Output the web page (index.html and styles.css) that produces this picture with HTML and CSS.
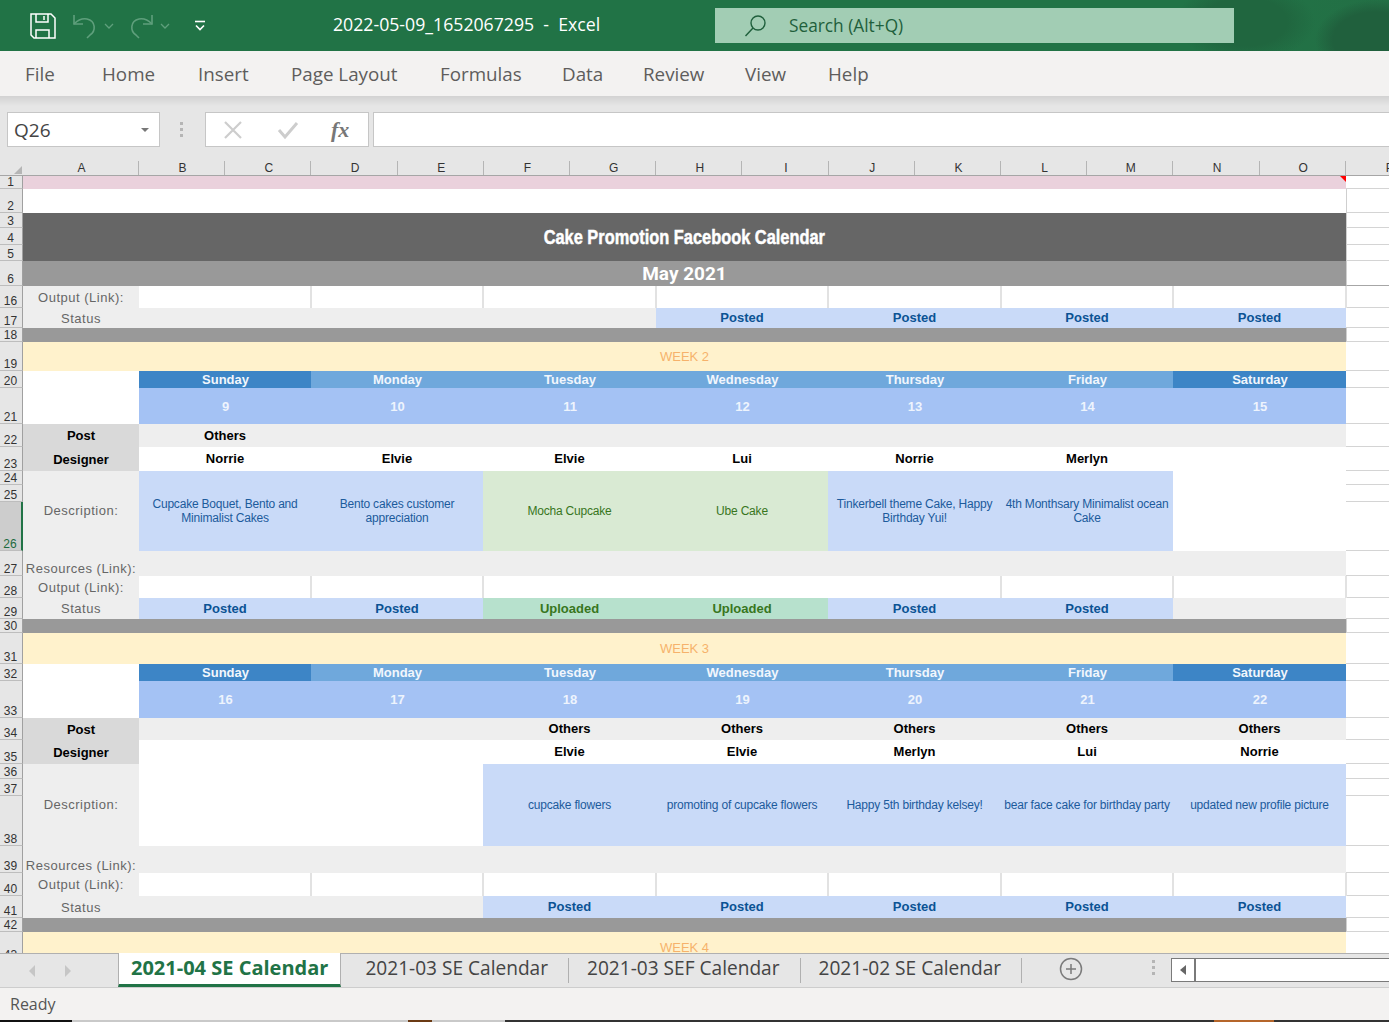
FILE: index.html
```html
<!DOCTYPE html>
<html lang="en">
<head>
<meta charset="utf-8">
<title>2022-05-09_1652067295 - Excel</title>
<link rel="stylesheet" href="styles.css">
</head>
<body>
<div class="app">
  <header class="titlebar">
    <div class="qat">
      <svg class="i-save" width="26" height="26" viewBox="0 0 26 26" fill="none" stroke="#fff" stroke-width="1.5"><path d="M1 1h20l4 4v20H4l-3-3z"/><path d="M6 1v8h12V1"/><path d="M14 3v4" /><path d="M6 25v-8h13v8"/></svg>
      <svg class="i-undo" width="24" height="26" viewBox="0 0 24 26" fill="none" stroke="#5f9f7c" stroke-width="1.6"><path d="M1 2v9h9"/><path d="M1 11c4-4 8-6 13-5 9 2 9 12 3 16l-3 3"/></svg>
      <svg class="i-chev" width="10" height="6" viewBox="0 0 10 6" fill="none" stroke="#5f9f7c" stroke-width="1.3"><path d="M1 1l4 4 4-4"/></svg>
      <svg class="i-redo" width="24" height="26" viewBox="0 0 24 26" fill="none" stroke="#5f9f7c" stroke-width="1.6"><path d="M23 2v9h-9"/><path d="M23 11c-4-4-8-6-13-5C1 8 1 18 7 22l3 3"/></svg>
      <svg class="i-chev" width="10" height="6" viewBox="0 0 10 6" fill="none" stroke="#5f9f7c" stroke-width="1.3"><path d="M1 1l4 4 4-4"/></svg>
      <svg class="i-more" width="12" height="12" viewBox="0 0 12 12" fill="none" stroke="#fff" stroke-width="1.6"><path d="M1 1.5h10"/><path d="M2 5.5l4 4 4-4"/></svg>
    </div>
    <div class="doc-title">2022-05-09_1652067295&nbsp; -&nbsp; Excel</div>
    <div class="search">
      <svg width="24" height="24" viewBox="0 0 24 24" fill="none" stroke="#1f5f3c" stroke-width="1.4"><circle cx="14" cy="9" r="7"/><path d="M9 14l-7.500 8"/></svg>
      <span>Search (Alt+Q)</span>
    </div>
  </header>

  <nav class="ribbon">
    <span>File</span><span>Home</span><span>Insert</span><span>Page Layout</span><span>Formulas</span><span>Data</span><span>Review</span><span>View</span><span>Help</span>
  </nav>

  <section class="formula">
    <div class="namebox"><span>Q26</span><i class="down"></i></div>
    <div class="grip"><i></i><i></i><i></i></div>
    <div class="fxbox">
      <svg width="20" height="20" viewBox="0 0 20 20" fill="none" stroke="#cdcdcd" stroke-width="2.200"><path d="M2 2l16 16M18 2L2 18"/></svg>
      <svg width="22" height="20" viewBox="0 0 22 20" fill="none" stroke="#cdcdcd" stroke-width="3"><path d="M2 10l6 7L20 3"/></svg>
      <span class="fx">fx</span>
    </div>
    <div class="input"></div>
  </section>

  <div class="colheads">
    <div class="corner"><i></i></div>
    <div class="ch">A</div><div class="ch">B</div><div class="ch">C</div><div class="ch">D</div><div class="ch">E</div><div class="ch">F</div><div class="ch">G</div><div class="ch">H</div><div class="ch">I</div><div class="ch">J</div><div class="ch">K</div><div class="ch">L</div><div class="ch">M</div><div class="ch">N</div><div class="ch">O</div><div class="ch last">P</div>
  </div>

  <main class="sheet">
    <div class="grid">
      <div class="rh">1</div><div class="c pink full"><i class="comment"></i></div><div class="p"></div>
      <div class="rh">2</div><div class="c full"></div><div class="p v"></div>
      <div class="rh">3</div><div class="c title full r3"><span class="title-text">Cake Promotion Facebook Calendar</span></div><div class="p v"></div>
      <div class="rh">4</div><div class="p v"></div>
      <div class="rh">5</div><div class="p v"></div>
      <div class="rh">6</div><div class="c month full">May 2021</div><div class="p v strong"></div>

      <div class="rh">16</div><div class="c lab">Output (Link):</div><div class="c out"></div><div class="c out"></div><div class="c out"></div><div class="c out"></div><div class="c out"></div><div class="c out"></div><div class="c out"></div><div class="p"></div>
      <div class="rh">17</div><div class="c lab">Status</div><div class="c gray"></div><div class="c gray"></div><div class="c gray"></div><div class="c st">Posted</div><div class="c st">Posted</div><div class="c st">Posted</div><div class="c st">Posted</div><div class="p"></div>
      <div class="rh">18</div><div class="c band full"></div><div class="p v"></div>

      <div class="rh">19</div><div class="c week full">WEEK 2</div><div class="p"></div>
      <div class="rh">20</div><div class="c r2"></div><div class="c dw dk">Sunday</div><div class="c dw">Monday</div><div class="c dw">Tuesday</div><div class="c dw">Wednesday</div><div class="c dw">Thursday</div><div class="c dw">Friday</div><div class="c dw dk">Saturday</div><div class="p"></div>
      <div class="rh">21</div><div class="c dn">9</div><div class="c dn">10</div><div class="c dn">11</div><div class="c dn">12</div><div class="c dn">13</div><div class="c dn">14</div><div class="c dn">15</div><div class="p"></div>
      <div class="rh">22</div><div class="c hd">Post</div><div class="c po">Others</div><div class="c po"></div><div class="c po"></div><div class="c po"></div><div class="c po"></div><div class="c po"></div><div class="c po"></div><div class="p"></div>
      <div class="rh">23</div><div class="c hd">Designer</div><div class="c de">Norrie</div><div class="c de">Elvie</div><div class="c de">Elvie</div><div class="c de">Lui</div><div class="c de">Norrie</div><div class="c de">Merlyn</div><div class="c de"></div><div class="p"></div>
      <div class="rh">24</div><div class="c lab r3">Description:</div><div class="c ds r3">Cupcake Boquet, Bento and<br>Minimalist Cakes</div><div class="c ds r3">Bento cakes customer<br>appreciation</div><div class="c ds gr r3">Mocha Cupcake</div><div class="c ds gr r3">Ube Cake</div><div class="c ds r3">Tinkerbell theme Cake, Happy<br>Birthday Yui!</div><div class="c ds r3">4th Monthsary Minimalist ocean<br>Cake</div><div class="c r3"></div><div class="p"></div>
      <div class="rh">25</div><div class="p"></div>
      <div class="rh sel">26</div><div class="p"></div>
      <div class="rh">27</div><div class="c lab btm">Resources (Link):</div><div class="c gray w7"></div><div class="p"></div>
      <div class="rh">28</div><div class="c lab">Output (Link):</div><div class="c out"></div><div class="c out"></div><div class="c out nb"></div><div class="c out nb"></div><div class="c out"></div><div class="c out"></div><div class="c out"></div><div class="p"></div>
      <div class="rh">29</div><div class="c lab">Status</div><div class="c st low">Posted</div><div class="c st low">Posted</div><div class="c st up low">Uploaded</div><div class="c st up low">Uploaded</div><div class="c st low">Posted</div><div class="c st low">Posted</div><div class="c gray"></div><div class="p"></div>
      <div class="rh">30</div><div class="c band full"></div><div class="p v"></div>

      <div class="rh">31</div><div class="c week full">WEEK 3</div><div class="p"></div>
      <div class="rh">32</div><div class="c r2"></div><div class="c dw dk">Sunday</div><div class="c dw">Monday</div><div class="c dw">Tuesday</div><div class="c dw">Wednesday</div><div class="c dw">Thursday</div><div class="c dw">Friday</div><div class="c dw dk">Saturday</div><div class="p"></div>
      <div class="rh">33</div><div class="c dn">16</div><div class="c dn">17</div><div class="c dn">18</div><div class="c dn">19</div><div class="c dn">20</div><div class="c dn">21</div><div class="c dn">22</div><div class="p"></div>
      <div class="rh">34</div><div class="c hd">Post</div><div class="c po"></div><div class="c po"></div><div class="c po">Others</div><div class="c po">Others</div><div class="c po">Others</div><div class="c po">Others</div><div class="c po">Others</div><div class="p"></div>
      <div class="rh">35</div><div class="c hd">Designer</div><div class="c de"></div><div class="c de"></div><div class="c de">Elvie</div><div class="c de">Elvie</div><div class="c de">Merlyn</div><div class="c de">Lui</div><div class="c de">Norrie</div><div class="p"></div>
      <div class="rh">36</div><div class="c lab r3">Description:</div><div class="c r3"></div><div class="c r3"></div><div class="c ds r3">cupcake flowers</div><div class="c ds r3">promoting of cupcake flowers</div><div class="c ds r3">Happy 5th birthday kelsey!</div><div class="c ds r3">bear face cake for birthday party</div><div class="c ds r3">updated new profile picture</div><div class="p"></div>
      <div class="rh">37</div><div class="p"></div>
      <div class="rh">38</div><div class="p"></div>
      <div class="rh">39</div><div class="c lab btm">Resources (Link):</div><div class="c gray w7"></div><div class="p"></div>
      <div class="rh">40</div><div class="c lab">Output (Link):</div><div class="c out"></div><div class="c out"></div><div class="c out"></div><div class="c out"></div><div class="c out"></div><div class="c out"></div><div class="c out"></div><div class="p"></div>
      <div class="rh">41</div><div class="c lab">Status</div><div class="c gray"></div><div class="c gray"></div><div class="c st">Posted</div><div class="c st">Posted</div><div class="c st">Posted</div><div class="c st">Posted</div><div class="c st">Posted</div><div class="p"></div>
      <div class="rh">42</div><div class="c band full"></div><div class="p v"></div>

      <div class="rh">43</div><div class="c week full">WEEK 4</div><div class="p"></div>
    </div>
  </main>

  <div class="tabs">
    <div class="tabnav"><i class="tl"></i><i class="tr"></i></div>
    <div class="tab active">2021-04 SE Calendar</div>
    <div class="tab">2021-03 SE Calendar</div>
    <div class="tab">2021-03 SEF Calendar</div>
    <div class="tab">2021-02 SE Calendar</div>
    <svg class="add" width="24" height="24" viewBox="0 0 24 24" fill="none" stroke="#7b7b7b" stroke-width="1.500"><circle cx="12" cy="12" r="10.500"/><path d="M12 7v10M7 12h10"/></svg>
    <div class="grip tabgrip"><i></i><i></i><i></i></div>
    <div class="hscroll"><div class="hbtn"><i></i></div></div>
  </div>

  <footer class="status">Ready</footer>
  <div class="taskbar"></div>
</div>
</body>
</html>
```
FILE: styles.css
```css
* { box-sizing: border-box; }
html, body { margin: 0; padding: 0; background: #f3f2f1; }
.app {
  width: 1389px; height: 1022px; overflow: hidden;
  display: flex; flex-direction: column;
  font-family: "Open Sans", "Noto Sans", sans-serif;
}

/* title bar */
.titlebar {
  height: 51px; flex: none; display: flex; align-items: center; color: #fff;
  background:
    radial-gradient(ellipse 70px 40px at 1245px 22px, #20663f 60%, transparent 100%),
    radial-gradient(ellipse 60px 40px at 1375px 40px, #20603d 70%, transparent 100%),
    linear-gradient(90deg, #217346 88%, #236f45 100%);
}
.qat { width: 333px; flex: none; display: flex; align-items: center; padding-left: 30px; }
.i-save { margin-right: 17px; }
.i-undo { margin-right: 7px; }
.i-chev { margin-right: 15px; }
.i-redo { margin-right: 7px; }
.i-more { margin-left: 9px; }
.doc-title { width: 382px; flex: none; font-size: 17.7px; margin-top: -3px; }
.search {
  width: 519px; height: 35px; flex: none;
  background: #a2cdb4; color: #1f5f3c; font-size: 17.3px;
  display: flex; align-items: center; padding-left: 29px; gap: 21px;
}

/* ribbon */
.ribbon {
  height: 45px; flex: none; background: #f3f2f1; color: #5e5d5c;
  font-size: 18.8px; padding-left: 25px;
  display: grid; align-items: center;
  grid-template-columns: 77px 96px 93px 149px 122px 81px 102px 83px 1fr;
}

/* formula bar */
.formula {
  height: 51px; flex: none; display: flex; align-items: flex-start; padding: 16px 0 0 7px;
  background: linear-gradient(#d2d2d2 0, #e6e6e6 10px);
}
.namebox {
  width: 153px; height: 35px; background: #fff; border: 1px solid #c6c6c6;
  display: flex; align-items: center; justify-content: space-between;
  padding: 0 10px 0 6px; font-size: 19px; color: #444;
}
.down { width: 0; height: 0; border: 4px solid transparent; border-top: 4px solid #777; border-bottom: 0; }
.grip { display: flex; flex-direction: column; gap: 3px; width: 45px; align-items: center; padding: 10px 2px 0 0; flex: none; }
.grip i { width: 3px; height: 3px; background: #b5b5b5; display: block; }
.fxbox {
  width: 164px; height: 35px; background: #fff; border: 1px solid #c6c6c6;
  display: flex; align-items: center; padding-left: 17px; gap: 34px; flex: none;
}
.fx { font-family: "Liberation Serif", serif; font-style: italic; font-weight: 700; font-size: 22px; color: #777; margin-left: -2px; }
.input { flex: 1; height: 35px; margin-left: 4px; background: #fff; border: 1px solid #c6c6c6; border-right: 0; }

/* column heads */
.colheads {
  height: 29px; flex: none; background: #e6e6e6;
  display: grid; grid-template-columns: 23px 116px repeat(14, 86.2143px) 86px;
  align-items: end; border-bottom: 1px solid #a6a6a6;
  font-family: "Liberation Sans", sans-serif; font-size: 12px; color: #333;
  width: 1389px; overflow: hidden;
}
.corner { height: 14px; position: relative; }
.corner i { display: block; position: absolute; right: 1px; bottom: 1px; width: 0; height: 0; border-left: 8px solid transparent; border-bottom: 8px solid #b5b5b5; }
.ch { height: 14px; line-height: 14px; text-align: center; border-right: 1px solid #b5b5b5; padding-left: 2px; }
.ch.last { border-right: 0; }

/* sheet */
.sheet { height: 777px; flex: none; overflow: hidden; background: #fff; position: relative; }
.grid {
  display: grid;
  grid-template-columns: 23px 116px 172px 172px 173px 172px 173px 172px 173px 43px;
  grid-template-rows:
    13px 24px 15px 17px 16px 25px 22px 20px 14px 29px 17px 36px 23px 24px 14px 17px 49px
    25px 22px 21px 14px 31px 17px 37px 22px 24px 15px 17px 50px 27px 23px 22px 14px 30px;
  font-family: "Liberation Sans", sans-serif; font-size: 13px;
}
.rh {
  grid-column: 1; background: #e6e6e6; color: #333; font-size: 12px;
  border-right: 1px solid #a0a0a0; border-bottom: 1px solid #bdbdbd;
  display: flex; align-items: flex-end; justify-content: center; padding-right: 1px; line-height: 11px;
}
.rh.sel { background: #cdcdcd; color: #1d6b40; border-right: 2px solid #217346; }
.c { display: flex; align-items: center; justify-content: center; text-align: center; min-width: 0; position: relative; }
.full { grid-column: 2 / span 8; }
.r2 { grid-row: span 2; }
.r3 { grid-row: span 3; }
.w7 { grid-column: span 7; }
.p { grid-column: 10; background: #fff; border-bottom: 1px solid #d4d4d4; }
.p.v { border-left: 1px solid #cfcfcf; }
.p.strong { border-bottom-color: #a6a6a6; }
.pink { background: #ead1dc; }
.comment { position: absolute; right: 0; top: 0; width: 0; height: 0; border-left: 6px solid transparent; border-top: 6px solid #f00; }
.title { background: #666; color: #fff; font-weight: 700; font-size: 21px; }
.title-text { display: inline-block; white-space: nowrap; transform: scaleX(.78); -webkit-text-stroke: .5px #fff; }
.month { background: #999; color: #fff; font-family: Roboto, sans-serif; font-weight: 700; font-size: 19px; }
.lab { background: #eee; color: #666; letter-spacing: .5px; white-space: nowrap; }
.lab.r3 { padding-bottom: 2px; }
.btm { align-items: flex-end; }
.gray { background: #eee; }
.out { background: #fff; }
.out::after { content: ""; position: absolute; top: 0; bottom: 0; right: -1px; width: 2px; background: #e2e2e2; z-index: 1; }
.out.nb::after { content: none; }
.st { background: #c9daf8; color: #0b5394; font-weight: 700; padding-bottom: 2px; }
.st.low { padding-bottom: 0; }
.st.up { background: #b7e1cd; color: #38761d; }
.band { background: #999; }
.week { background: #fff2cc; color: #f6b26b; font-size: 13px; }
.dw { background: #6fa8dc; color: #f1f6fc; font-weight: 700; padding-left: 1px; }
.dw.dk { background: #3d85c6; }
.dn { background: #a4c2f4; color: #eef4fd; font-weight: 700; padding-left: 1px; }
.hd { background: #d9d9d9; color: #000; font-weight: 700; }
.po { background: #eee; color: #000; font-weight: 700; padding-bottom: 1px; }
.de { background: #fff; color: #000; font-weight: 700; padding-bottom: 2px; }
.ds { background: #c9daf8; color: #1c5b9c; font-size: 12px; letter-spacing: -.2px; line-height: 14px; white-space: nowrap; }
.ds.gr { background: #d9ead3; color: #38761d; }

/* tabs */
.tabs {
  height: 35px; flex: none; background: #e6e6e6;
  border-top: 1px solid #b0b0b0; border-bottom: 1px solid #cdcdcd;
  display: flex; align-items: stretch; font-size: 19.1px; color: #444;
}
.tabnav { width: 118px; flex: none; display: flex; align-items: center; gap: 30px; padding-left: 29px; }
.tl, .tr { width: 0; height: 0; border: 6px solid transparent; display: block; }
.tl { border-right: 6px solid #c6c6c6; border-left: 0; }
.tr { border-left: 6px solid #c6c6c6; border-right: 0; }
.tab { display: flex; align-items: center; padding: 0 21px 6px 18px; position: relative; white-space: nowrap; }
.tab:not(.active)::after { content: ""; position: absolute; right: 0; top: 4px; bottom: 4px; width: 1px; background: #b0b0b0; }
.tab.active {
  background: #fff; color: #217346; font-weight: 700; font-size: 20px; padding: 0 12px 2px;
  border-left: 1px solid #b0b0b0; border-right: 1px solid #b0b0b0;
  border-bottom: 3px solid #217346; margin-top: -1px; margin-right: 6px;
}
.add { align-self: center; margin-left: 37px; margin-top: -3px; flex: none; }
.tabgrip { width: 10px; margin-left: 65px; padding: 6px 0 0; }
.hscroll { margin-left: 13px; flex: 1; margin-top: 4px; margin-bottom: 5px; background: #fff; border: 1px solid #7a7a7a; border-right: 0; }
.hbtn { width: 24px; height: 100%; border-right: 2px solid #7a7a7a; display: flex; align-items: center; justify-content: center; }
.hbtn i { display: block; width: 0; height: 0; border: 5px solid transparent; border-right: 6px solid #666; border-left: 0; }

/* status */
.status { height: 32px; flex: none; background: #f3f2f1; color: #555; font-size: 16px; padding-left: 10px; line-height: 33px; }
.taskbar {
  height: 2px; flex: none;
  background: linear-gradient(90deg, #111 72px, #c9c9c9 72px, #c9c9c9 408px, #6b3a14 408px, #6b3a14 432px, #c9c9c9 432px, #c9c9c9 505px, #333 505px, #333 1214px, #b5652a 1214px, #b5652a 1274px, #333 1274px);
}
```
